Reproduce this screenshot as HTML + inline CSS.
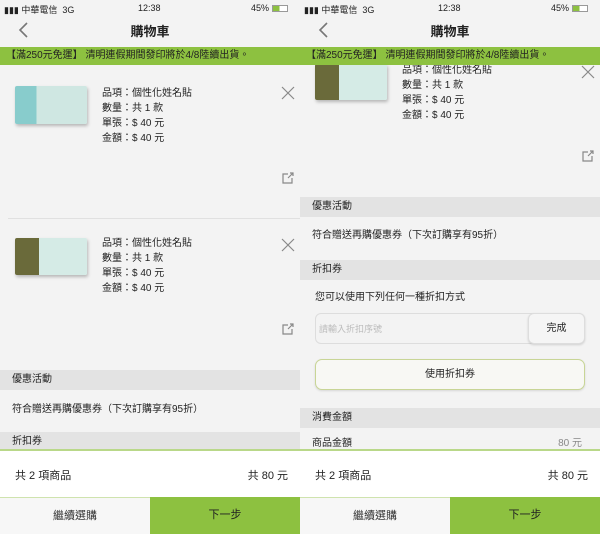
<!DOCTYPE html><html><head><meta charset="utf-8"><style>
*{margin:0;padding:0;box-sizing:border-box}
body{width:600px;height:534px;overflow:hidden;background:#f3f3f3;font-family:"Liberation Sans","Noto Sans CJK TC",sans-serif;color:#222;position:relative}
.ph{position:absolute;top:0;width:300px;height:534px;overflow:hidden;background:#f3f3f3}
.a{position:absolute;white-space:nowrap}
.sb{font-size:9px;top:3px}
.nav{font-size:13px;font-weight:bold;left:0;width:300px;text-align:center;top:21px}
.ban{position:absolute;left:0;top:47px;width:300px;height:18px;background:#8dc140;font-size:10px;line-height:18px;padding-left:6px;color:#222}
.info{font-size:10px;line-height:15px}
.img{position:absolute;border-radius:2px;box-shadow:1px 2px 3px rgba(0,0,0,.25);background:linear-gradient(90deg,#6aa 0 28%,#d5ece6 28%)}
.hdr{position:absolute;left:0;width:300px;height:20px;background:#e3e3e3;font-size:10px;line-height:20px;padding-left:12px}
.t{font-size:10px}
.foot{position:absolute;left:0;top:449px;width:300px;height:48px;background:#fff;border-top:2px solid #b9d889}
.btnl{position:absolute;left:0;top:497px;width:150px;height:37px;background:#f7f7f7;font-size:11px;text-align:center;line-height:37px;color:#333;border-top:1px solid #cfe3ae}
.btnr{position:absolute;left:150px;top:497px;width:150px;height:37px;background:#8dc140;font-size:11px;text-align:center;line-height:37px;color:#222}
.x{font-size:20px;color:#777;font-weight:200}
</style></head><body>
<!-- LEFT -->
<div class="ph" style="left:0">
<div class="a sb" style="left:4px">▮▮▮ 中華電信&nbsp;&nbsp;3G</div>
<div class="a sb" style="left:138px">12:38</div>
<div class="a sb" style="left:251px">45% <span style="display:inline-block;width:16px;height:7px;border:1px solid #999;vertical-align:middle;background:linear-gradient(90deg,#8dc140 45%,#fff 45%)"></span></div>
<svg class="a" style="left:18px;top:22px" width="12" height="16"><path d="M9 1L2 8l7 7" stroke="#777" stroke-width="1.6" fill="none"/></svg>
<div class="a nav">購物車</div>
<div class="ban">【滿250元免運】 清明連假期間發印將於4/8陸續出貨。</div>
<div class="img" style="left:15px;top:86px;width:72px;height:38px;background:linear-gradient(90deg,#8cc 0 30%,#cfe7e2 30%)"></div>
<div class="a info" style="left:102px;top:86px">品項：個性化姓名貼<br>數量：共 1 款<br>單張：$ 40 元<br>金額：$ 40 元</div>
<svg class="a" style="left:281px;top:86px" width="14" height="14"><path d="M1 1l12 12M13 1L1 13" stroke="#888" stroke-width="1.2"/></svg>
<svg class="a" style="left:282px;top:172px" width="12" height="12"><path d="M6 2H1v9h9V6M6 6l5-5M8 1h3v3" stroke="#888" stroke-width="1.2" fill="none"/></svg>
<div class="a" style="left:8px;top:218px;width:292px;height:1px;background:#e0e0e0"></div>
<div class="img" style="left:15px;top:238px;width:72px;height:37px;background:linear-gradient(90deg,#6a6a3a 0 33%,#d5ebe6 33%)"></div>
<div class="a info" style="left:102px;top:236px">品項：個性化姓名貼<br>數量：共 1 款<br>單張：$ 40 元<br>金額：$ 40 元</div>
<svg class="a" style="left:281px;top:238px" width="14" height="14"><path d="M1 1l12 12M13 1L1 13" stroke="#888" stroke-width="1.2"/></svg>
<svg class="a" style="left:282px;top:323px" width="12" height="12"><path d="M6 2H1v9h9V6M6 6l5-5M8 1h3v3" stroke="#888" stroke-width="1.2" fill="none"/></svg>
<div class="hdr" style="top:370px">優惠活動</div>
<div class="a t" style="left:12px;top:400px">符合贈送再購優惠券（下次訂購享有95折）</div>
<div class="hdr" style="top:432px">折扣券</div>
<div class="foot"><div class="a" style="left:15px;top:16px;font-size:11px">共 2 項商品</div><div class="a" style="right:12px;top:16px;font-size:11px">共 80 元</div></div>
<div class="btnl">繼續選購</div><div class="btnr">下一步</div>
</div>
<!-- RIGHT -->
<div class="ph" style="left:300px">
<div class="a sb" style="left:4px">▮▮▮ 中華電信&nbsp;&nbsp;3G</div>
<div class="a sb" style="left:138px">12:38</div>
<div class="a sb" style="left:251px">45% <span style="display:inline-block;width:16px;height:7px;border:1px solid #999;vertical-align:middle;background:linear-gradient(90deg,#8dc140 45%,#fff 45%)"></span></div>
<svg class="a" style="left:18px;top:22px" width="12" height="16"><path d="M9 1L2 8l7 7" stroke="#777" stroke-width="1.6" fill="none"/></svg>
<div class="a nav">購物車</div>
<div class="img" style="left:15px;top:64px;width:72px;height:36px;background:linear-gradient(90deg,#6a6a3a 0 33%,#d5ebe6 33%)"></div>
<div class="a info" style="left:102px;top:63px">品項：個性化姓名貼<br>數量：共 1 款<br>單張：$ 40 元<br>金額：$ 40 元</div>
<div class="ban">【滿250元免運】 清明連假期間發印將於4/8陸續出貨。</div>
<svg class="a" style="left:281px;top:65px" width="14" height="14"><path d="M1 1l12 12M13 1L1 13" stroke="#888" stroke-width="1.2"/></svg>
<svg class="a" style="left:282px;top:150px" width="12" height="12"><path d="M6 2H1v9h9V6M6 6l5-5M8 1h3v3" stroke="#888" stroke-width="1.2" fill="none"/></svg>
<div class="hdr" style="top:197px">優惠活動</div>
<div class="a t" style="left:12px;top:226px">符合贈送再購優惠券（下次訂購享有95折）</div>
<div class="hdr" style="top:260px">折扣券</div>
<div class="a t" style="left:15px;top:288px">您可以使用下列任何一種折扣方式</div>
<div class="a" style="left:15px;top:313px;width:270px;height:31px;border:1px solid #ddd;border-radius:6px;background:#f3f3f3"></div>
<div class="a" style="left:19px;top:322px;font-size:9px;color:#bbb">請輸入折扣序號</div>
<div class="a" style="left:228px;top:313px;width:57px;height:31px;border:1px solid #ddd;border-radius:6px;background:#f5f5f5;font-size:10px;text-align:center;line-height:29px;box-shadow:0 1px 2px rgba(0,0,0,.15)">完成</div>
<div class="a" style="left:15px;top:359px;width:270px;height:31px;border:1px solid #c8d596;border-radius:7px;background:#f8f8f4;font-size:10px;text-align:center;line-height:29px;box-shadow:0 1px 2px rgba(0,0,0,.12)">使用折扣券</div>
<div class="hdr" style="top:408px">消費金額</div>
<div class="a t" style="left:12px;top:434px">商品金額</div>
<div class="a t" style="right:18px;top:434px;color:#888">80 元</div>
<div class="foot"><div class="a" style="left:15px;top:16px;font-size:11px">共 2 項商品</div><div class="a" style="right:12px;top:16px;font-size:11px">共 80 元</div></div>
<div class="btnl">繼續選購</div><div class="btnr">下一步</div>
</div>
</body></html>
